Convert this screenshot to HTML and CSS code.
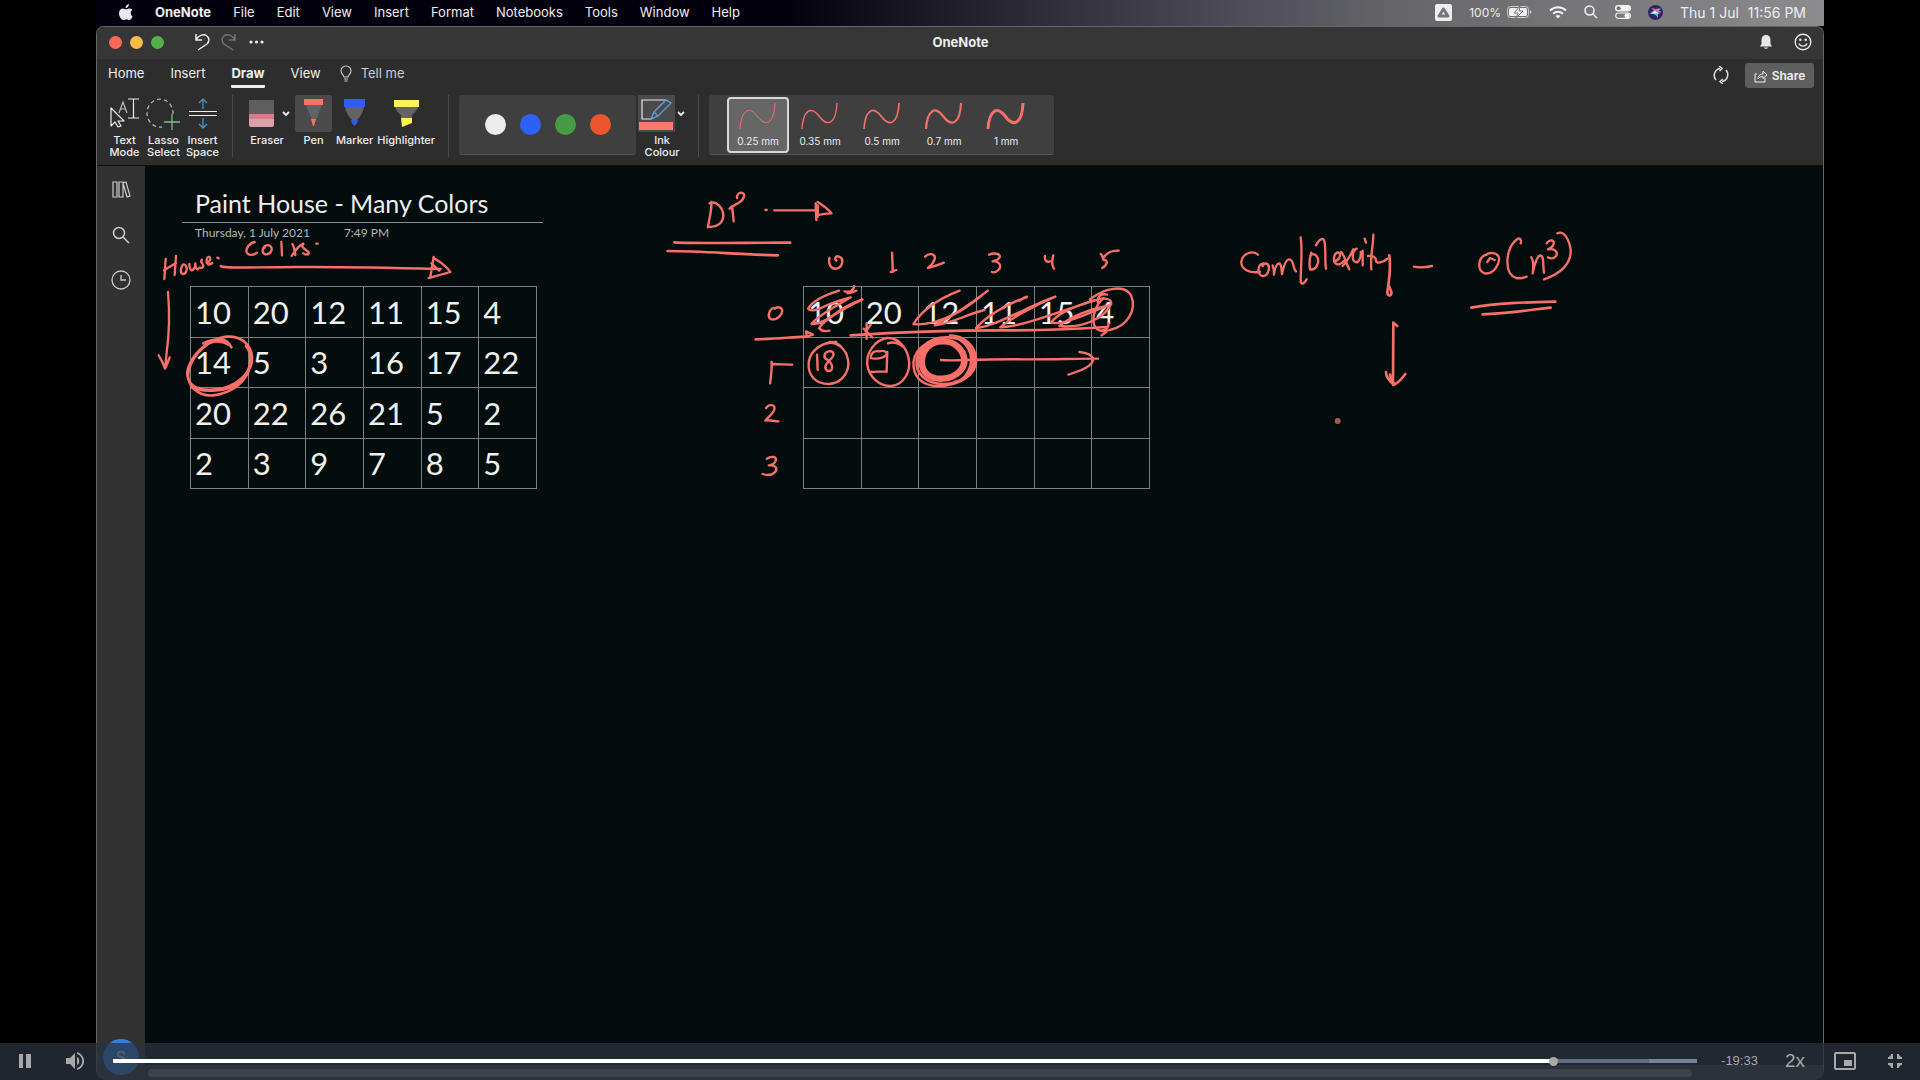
FILE: index.html
```html
<!DOCTYPE html>
<html lang="en">
<head>
<meta charset="utf-8">
<title>Paint House - Many Colors</title>
<link rel="stylesheet" href="styles.css">
</head>
<body>
<main class="stage">
  <nav class="menubar" aria-label="Menu bar">
    <div class="menus">
      <svg class="apple" width="14" height="17" viewBox="0 0 14 17"><path fill="#e8e8ec" d="M9.900 0c.1 1.300-.4 2.300-1 3-.6.700-1.400 1.200-2.300 1.100C6.500 3 7 2 7.600 1.300 8.200.6 9.200.1 9.900 0zM13.600 12.200c-.9 2.200-1.900 3.900-3.300 3.900-1 0-1.500-.6-2.800-.6s-1.900.6-2.800.6C2.600 16.100 0 12.900 0 9.200 0 6.200 1.900 4.400 4 4.400c1.200 0 2.200.8 3 .8s2-.9 3.500-.8c1 0 2.100.5 2.800 1.500-2.300 1.500-2 4.900.3 6.300z"/></svg>
      <a href="#" class="app">OneNote</a>
      <a href="#">File</a>
      <a href="#">Edit</a>
      <a href="#">View</a>
      <a href="#">Insert</a>
      <a href="#">Format</a>
      <a href="#">Notebooks</a>
      <a href="#">Tools</a>
      <a href="#">Window</a>
      <a href="#">Help</a>
    </div>
    <div class="status">
      <svg width="17" height="17" viewBox="0 0 17 17"><rect width="17" height="17" rx="2" fill="#eee"/><path d="M8.500 5 13 12H4z" fill="none" stroke="#77777a" stroke-width="3" stroke-linejoin="round"/></svg>
      <span class="battery"><span>100%</span>
        <svg width="25" height="12" viewBox="0 0 25 12"><rect x=".5" y=".5" width="21" height="11" rx="3" fill="none" stroke="#ccc"/><rect x="2" y="2" width="18" height="8" rx="1.500" fill="#f2f2f2"/><path d="M23 4v4c2-1 2-3 0-4z" fill="#ccc"/><path d="M13 0 7 7h4l-2 5 7-7h-4z" fill="#f2f2f2" stroke="#77777a"/></svg></span>
      <svg width="18" height="13" viewBox="0 0 18 13" fill="none" stroke="#f2f2f2" stroke-width="2"><path d="M1 4.500c4.500-4.300 11.500-4.300 16 0M4 7.800c3-2.600 7-2.600 10 0"/><path d="M6.500 10c1.500-1.200 3.500-1.200 5 0L9 12.500z" fill="#f2f2f2" stroke="none"/></svg>
      <svg width="14" height="14" viewBox="0 0 14 14" fill="none" stroke="#f2f2f2" stroke-width="1.500"><circle cx="5.500" cy="5.500" r="4.500"/><path d="m9 9 4 4"/></svg>
      <svg width="16" height="14" viewBox="0 0 16 14"><rect width="16" height="6.500" rx="3.200" fill="#f2f2f2"/><circle cx="3.600" cy="3.200" r="2" fill="#77777a"/><rect x=".7" y="8" width="14.600" height="5.400" rx="2.700" fill="none" stroke="#f2f2f2" stroke-width="1.200"/><circle cx="12" cy="10.700" r="2.500" fill="#f2f2f2"/></svg>
      <svg width="15" height="15" viewBox="0 0 15 15"><circle cx="7.500" cy="7.500" r="7.500" fill="#2d2560"/><path d="M1 9c3-1 6-7 12-5-3 1-3 4-3 9-2-3-4-5-9-4z" fill="#4fb7e8"/><path d="M3 3c4 0 7 3 11 4-4 2-7 0-11-4z" fill="#e5629c"/><path d="M3 9c3-1 6-1 9 0L7 6z" fill="#fff"/></svg>
      <time class="clock"><span>Thu 1 Jul</span><span>11:56 PM</span></time>
    </div>
  </nav>

  <section class="window">
    <header class="titlebar">
      <div class="title-left">
        <span class="lights"><i class="light red"></i><i class="light yellow"></i><i class="light green"></i></span>
        <span class="quick">
          <button type="button" aria-label="Undo"><svg width="16" height="18" viewBox="0 0 16 18"><path d="M2 1v6h6M2 6.500C5 2 10 .5 13 3s2 6 0 8l-9 6" fill="none" stroke="#eee" stroke-width="1.500"/></svg></button>
          <button type="button" aria-label="Redo"><svg width="16" height="18" viewBox="0 0 16 18"><path d="M14 1v6H8M14 6.500C11 2 6 .5 3 3s-2 6 0 8l9 6" fill="none" stroke="#737373" stroke-width="1.500"/></svg></button>
          <button type="button" aria-label="More"><svg width="16" height="18" viewBox="0 0 16 18" fill="#eee"><circle cx="3" cy="9" r="1.600"/><circle cx="8.500" cy="9" r="1.600"/><circle cx="14" cy="9" r="1.600"/></svg></button>
        </span>
      </div>
      <h1 class="app-title">OneNote</h1>
      <div class="title-right">
        <button type="button" aria-label="Notifications"><svg width="14" height="16" viewBox="0 0 14 16"><path d="M7 1c3 0 4.500 2 4.500 5v4L13 12.500H1L2.500 10V6c0-3 1.500-5 4.500-5zM5 13.500h4c-.5 1.800-3.500 1.800-4 0z" fill="#e8e8e8"/></svg></button>
        <button type="button" aria-label="Feedback"><svg width="18" height="18" viewBox="0 0 18 18" fill="none" stroke="#e8e8e8" stroke-width="1.400"><circle cx="9" cy="9" r="7.800"/><path d="M5 10.500c1.500 3.500 6.500 3.500 8 0"/><circle cx="6.300" cy="6.800" r=".6" fill="#e8e8e8"/><circle cx="11.700" cy="6.800" r=".6" fill="#e8e8e8"/></svg></button>
      </div>
    </header>

    <div class="tabs">
      <nav class="tab-list" aria-label="Ribbon tabs">
        <a href="#">Home</a>
        <a href="#">Insert</a>
        <a href="#" class="active">Draw</a>
        <a href="#">View</a>
        <a href="#" class="tell"><svg width="12" height="17" viewBox="0 0 12 17" fill="none" stroke="#ccc" stroke-width="1.100"><path d="M4 12c0-2-3-3-3-6a5 5 0 0 1 10 0c0 3-3 4-3 6zM4 14h4M4.500 16h3"/></svg>Tell me</a>
      </nav>
      <div class="tab-actions">
        <button type="button" aria-label="Sync"><svg width="18" height="18" viewBox="0 0 18 18" fill="none" stroke="#ddd" stroke-width="1.500"><path d="M4 14A7 7 0 0 1 8 2.500M14 4a7 7 0 0 1-4 11.500"/><path d="M7 0l3 2.500L7.500 5M11 13l-3 2.500 3 2.500"/></svg></button>
        <button type="button" class="share"><svg width="14" height="14" viewBox="0 0 14 14" fill="none" stroke="#eee"><path d="M3 5H1v8h10V9"/><path d="M4 10c0-4 3-5 5-5V2l4 4-4 3.500V7.500C7 7.500 5 8 4 10z"/></svg>Share</button>
      </div>
    </div>

    <div class="ribbon">
      <div class="group modes">
        <button type="button" class="tool"><svg width="36" height="37" viewBox="0 0 36 37" fill="none" stroke="#eee" stroke-width="1.200"><path d="M4 13v18l4-4 3 5 3-1-3-5h6z" stroke-linejoin="round"/><path d="m12 18 4-11 4 11M13.500 14h5" stroke="#bbb"/><path d="M21 4h11M21 23h11M26.500 4v19"/></svg>Text<br>Mode</button>
        <button type="button" class="tool"><svg width="36" height="37" viewBox="0 0 36 37" fill="none"><path d="M27 19A13 14 0 1 0 16 32" stroke="#bbb" stroke-width="1.200" stroke-dasharray="4 3"/><path d="M26 19v16M18 27h16" stroke="#72c483" stroke-width="1.300"/></svg>Lasso<br>Select</button>
        <button type="button" class="tool"><svg width="36" height="37" viewBox="0 0 36 37" fill="none"><path d="M4 16.500h28M4 20.500h28" stroke="#eee" stroke-width="1.200"/><path d="M18 14V4M14 8l4-4 4 4M18 23v10M14 29l4 4 4-4" stroke="#4a92c4" stroke-width="1.300"/></svg>Insert<br>Space</button>
      </div>
      <div class="group pens">
        <button type="button" class="tool"><svg width="48" height="37" viewBox="0 0 48 37"><path d="M6 5h25v15H6z" fill="#5e5e5e"/><path d="M6 19h25v11q0 2-2 2H8q-2 0-2-2z" fill="#d9a3ab"/><path d="M6 19h25v5H6z" fill="#d27f8b"/><path d="m40 17 3 3 3-3" fill="none" stroke="#eee" stroke-width="1.800"/></svg>Eraser</button>
        <button type="button" class="tool selected"><svg width="37" height="37" viewBox="0 0 37 37"><path d="M9 4h19v6H9z" fill="#f77465"/><path d="M11 10h16l-6 15h-4z" fill="#636363"/><path d="M16 24h5l-2 7h-1z" fill="#f77465"/></svg>Pen</button>
        <button type="button" class="tool"><svg width="37" height="37" viewBox="0 0 37 37"><path d="M8 4h21v8H8z" fill="#2f5cf5"/><path d="M9 12h19q-1 7-7 13h-5q-6-6-7-13z" fill="#636363"/><path d="M15 25h7q0 3-3.500 6Q15 28 15 25z" fill="#2f5cf5"/></svg>Marker</button>
        <button type="button" class="tool"><svg width="37" height="37" viewBox="0 0 37 37"><path d="M6 5h25v7H6z" fill="#fbf355"/><path d="M7 12h23q-1 4-6 8v3H13v-3q-5-4-6-8z" fill="#636363"/><path d="M13 23h11v5l-10 4z" fill="#fbf355"/></svg>Highlighter</button>
      </div>
      <div class="group colours">
        <div class="palette">
          <button type="button" class="swatch white" aria-label="White"></button>
          <button type="button" class="swatch blue" aria-label="Blue"></button>
          <button type="button" class="swatch leaf" aria-label="Green"></button>
          <button type="button" class="swatch orange" aria-label="Orange"></button>
        </div>
        <button type="button" class="tool ink-colour"><svg width="48" height="37" viewBox="0 0 48 37"><path d="M0 0h37v37H0z" fill="#4a4a4a"/><path d="M1 27h34v8H1z" fill="#f77b6c"/><path d="M28 5H4v19h10" fill="none" stroke="#e8e8e8" stroke-width="1.200"/><path d="m13 24 3-7L28 5l5 3-13 13zM16 17l4 4" fill="none" stroke="#5b9bd8" stroke-width="1.400"/><path d="m40 17 3 3 3-3" fill="none" stroke="#eee" stroke-width="1.800"/></svg>Ink<br>Colour</button>
      </div>
      <div class="group widths">
        <div class="width-panel">
          <button type="button" class="nib on"><svg width="40" height="28" viewBox="0 0 40 28"><path d="M2 27C3 9 11 3 19 14s17 9 18-13" stroke-width="1"/></svg>0.25 mm</button>
          <button type="button" class="nib"><svg width="40" height="28" viewBox="0 0 40 28"><path d="M2 27C3 9 11 3 19 14s17 9 18-13" stroke-width="1.300"/></svg>0.35 mm</button>
          <button type="button" class="nib"><svg width="40" height="28" viewBox="0 0 40 28"><path d="M2 27C3 9 11 3 19 14s17 9 18-13" stroke-width="1.700"/></svg>0.5 mm</button>
          <button type="button" class="nib"><svg width="40" height="28" viewBox="0 0 40 28"><path d="M2 27C3 9 11 3 19 14s17 9 18-13" stroke-width="2.200"/></svg>0.7 mm</button>
          <button type="button" class="nib"><svg width="40" height="28" viewBox="0 0 40 28"><path d="M2 27C3 9 11 3 19 14s17 9 18-13" stroke-width="3"/></svg>1 mm</button>
        </div>
      </div>
    </div>

    <div class="workspace">
      <aside class="sidebar">
        <button type="button" aria-label="Notebooks"><svg width="20" height="20" viewBox="0 0 20 20" fill="none" stroke="#ccc" stroke-width="1.200"><path d="M2 2h4v15H2zM8 2h4v15H8zM12 3l3-1 4 14-3 1z"/></svg></button>
        <button type="button" aria-label="Search"><svg width="20" height="20" viewBox="0 0 20 20" fill="none" stroke="#ccc" stroke-width="1.500"><circle cx="8" cy="8" r="5.500"/><path d="m12 12 6 6"/></svg></button>
        <button type="button" aria-label="Recent"><svg width="20" height="20" viewBox="0 0 20 20" fill="none" stroke="#ccc" stroke-width="1.300"><circle cx="10" cy="10" r="9"/><path d="M10 5v5h5"/></svg></button>
        <span class="avatar">S</span>
      </aside>

      <article class="canvas">
        <header class="note-head">
          <h2>Paint House - Many Colors</h2>
          <p><span>Thursday, 1 July 2021</span><span>7:49 PM</span></p>
        </header>
        <div class="grids">
          <table class="grid">
            <tr><td>10</td><td>20</td><td>12</td><td>11</td><td>15</td><td>4</td></tr>
            <tr><td>14</td><td>5</td><td>3</td><td>16</td><td>17</td><td>22</td></tr>
            <tr><td>20</td><td>22</td><td>26</td><td>21</td><td>5</td><td>2</td></tr>
            <tr><td>2</td><td>3</td><td>9</td><td>7</td><td>8</td><td>5</td></tr>
          </table>
          <table class="grid">
            <tr><td>10</td><td>20</td><td>12</td><td>11</td><td>15</td><td>4</td></tr>
            <tr><td></td><td></td><td></td><td></td><td></td><td></td></tr>
            <tr><td></td><td></td><td></td><td></td><td></td><td></td></tr>
            <tr><td></td><td></td><td></td><td></td><td></td><td></td></tr>
          </table>
        </div>
        <div class="scroll-bar"><div class="scroll-thumb"></div></div>

        <!-- pen strokes drawn over the note -->
        <svg class="ink" width="1679" height="914" viewBox="145 166 1679 914">
          <svg x="90" y="160" width="480" height="340" viewBox="0 0 1440 1020">
            <path d="M494 246C478 248 466 268 470 277c4 10 20 10 31 1M524 258c-9 10-8 26 6 25 15-1 20-20 9-26-8-4-15 0-16 7M574 246l2 40M607 252c6 10 8 24 9 33M605 288c11-18 24-32 35-37M640 252c-11 9 9 17 16 25 2 8-10 8-16 3M679 251h4"/>
            <path d="M227 297l-4 60M222 331l36-22M258 288l-4 57M276 318c-6 12-4 24 4 24s14-16 8-24-10-4-12 0M298 312c0 12 4 22 10 18s8-12 8-20c0 8 2 18 8 18M336 299c-8 6 4 12 4 18s-6 8-12 6M350 308c10-2 14-14 8-17s-11 10-7 18 9 4 16 0M382 293l4 2"/>
            <path d="M392 318c10 8 60 4 228 3s280 2 432 6M1031 291l-10 60M1030 293c20 12 42 28 51 43-20 6-42 12-65 18M1024 310l24 22"/>
            <path d="M234 396c6 70 3 130-4 182l-5 48M206 586c8 12 14 26 19 40 6-12 10-24 14-34"/>
            <path class="thick" d="M424 562c-14-32-54-27-84-2-30 25-50 60-48 85 4 45 58 50 108 40 50-15 90-55 86-95-4-40-36-63-76-60-50 6-100 50-114 100-11 50 34 80 74 76 50-6 98-36 110-86"/>
            <path class="thick" d="M304 682c30 14 110 18 150-20 30-30 36-80 14-104M346 556c20-16 50-14 70-2M340 550c24-12 44-14 66-8"/>
          </svg>
          <svg x="640" y="180" width="540" height="320" viewBox="0 0 1568 960" preserveAspectRatio="none">
            <path d="M207 66c2 26-8 60-10 76M202 70c20-10 38 14 40 34 0 24-18 40-44 36M268 84l4 40M260 86c8-10 20-12 30-20 10-6 20-26 4-28-8 0-14 8-12 16"/>
            <path d="M364 90h4M390 91h126M510 70l2 50M516 66c12 8 30 20 40 34-14 0-28 2-44 6M516 76v34"/>
            <path class="thick" d="M100 187c60 4 200 1 336 1M80 213c100 0 200 10 320 13"/>
            <path d="M550 234c-4 20 6 34 20 32 18-4 24-30 8-36-10-4-14 6-8 12M732 218l2 58M728 276l16-6M828 230c10-12 30-10 28 6-4 16-16 24-20 28 12-4 30-8 46-16M1014 224c14-6 34-4 30 8-4 10-16 10-20 12 14-2 26 8 20 22-6 10-16 12-22 10M1176 228c-2 14 6 20 14 16M1200 226c-4 16-4 32 2 40M1338 222c6 4 6 12 8 18 14 0 12 14-4 24M1344 236c8-14 20-26 46-24"/>
            <path d="M388 384c-14 4-20 30-6 34 18 2 34-16 30-30-4-8-16-8-20-2M382 546c2 20-2 40-4 64M386 552c20 2 40 0 56 2M366 684c10-14 28-10 24 4-2 12-22 26-26 34 10-4 24 2 38 2M368 836c12-8 30-8 26 6-2 8-12 14-20 14 16-2 26 6 20 18-8 10-22 14-38 8"/>
            <path class="thick" d="M336 478c60-2 100-6 144-8M612 466c140-10 300-16 480-15 100-1 180-4 264-10"/>
            <path d="M482 454l20 10-18 6zM658 430v46M670 434l-14 20M650 446l24 26"/>
            <path d="M578 332c-50 16-80 36-90 54 6 10 30 4 50-8 30-14 60-22 74-26-60 36-100 60-114 80 30 2 60-26 90-46 20-12 40-22 58-28-60 30-110 60-126 86 8 12 20 10 30 8M594 334c14 4 26-2 28-16M602 340c12 0 20-6 26-8"/>
            <path d="M928 332c-60 24-110 60-134 100 40 6 80-10 120-30 40-20 70-50 96-70-50 40-110 80-154 104 50-6 90-32 144-46M1122 352c-60 20-120 60-146 92 60-6 160-70 230-94-60 26-130 66-160 92 70-2 170-50 300-88M1124 350c-10 2-16 8-22 12"/>
            <path d="M1320 360c-60 20-110 40-126 68 30 8 90-20 166-52-50 10-110 34-142 62 60 8 130-20 150-66 2-16-20-20-28-12-30 30-40 110 24 90 50-10 80-60 62-104-20-36-80-20-120 12M1356 344c-20-6-30 10-26 26M1340 452c16-2 22-14 20-22M1340 466l14-10"/>
            <path d="M570 486c-40-2-76 26-80 60-4 40 20 66 58 66 40-2 62-40 56-72-6-36-34-56-60-50-12 2-30 10-36 20M584 500c-12-12-24-14-34-14M514 524l2 46M550 514c-14 0-20 18-8 24 12 6 20 20 14 32-12 8-22-4-16-16 6-12 24-22 22-32-2-8-8-10-14-8"/>
            <path d="M718 474c-36 6-62 44-58 80 4 38 38 66 70 64 36-4 58-44 50-84-8-32-28-60-60-60M720 490c16-6 34 0 44 10M694 514c-16-4-24 8-24 20 10 4 36 2 46-10 2-10-10-14-22-10M718 516l-2 60M716 574c-16 0-30 2-48 2"/>
            <path class="brush" d="M882 484c-42-2-64 30-64 62 0 32 24 52 60 50 40-2 66-30 64-58-4-30-28-54-60-54"/>
            <path class="thick" d="M820 500c40-40 120-36 140 6 24 40 2 90-50 102-46 12-90-4-104-40-10-34 8-76 60-88"/>
            <path d="M900 466c40 0 76 30 76 76 0 44-50 76-110 76-50 0-74-30-72-72 4-26 20-44 36-52M956 500c14 30 10 70-20 96M930 480c40 30 44 80 0 124"/>
            <path d="M874 540c40 4 100-4 250-2 80 0 140-2 206-2M1276 516c20 2 36 10 40 20 0 24-40 36-72 48"/>
          </svg>
          <svg x="1200" y="200" width="420" height="240" viewBox="0 0 1260 720">
            <path d="M174 164c-16-14-46-4-50 20-2 24 24 36 56 32M190 190c-20 4-18 36-2 38 18 0 26-32 10-38-6 0-8 4-10 8M218 196c4 10 4 20 4 28 2-16 6-34 16-34 8 4 6 20 8 32 4-20 10-44 22-44 14 0 10 28 20 36"/>
            <path d="M302 112c6 46 0 90 0 134 4 10 12 2 18-8M334 158c-6 18-6 38-4 50 18 4 30-22 22-36-4-10-16-12-20-6M348 136c8-18 24-28 26-8 4 26 0 58 4 78M402 184c14 0 24-22 14-26s-18 16-12 28 20 8 28-4M424 156c10 12 16 38 24 52M428 198c14-14 24-34 32-50M470 146c-16 8-14 36-4 40s18-14 16-30M488 152v44M494 116l4 12M520 104c0 30-10 70-6 104M504 168c14-2 24 4 24 14s22 6 34-6"/>
            <path class="thick" d="M568 166c6 40-2 80-6 110 0 14 14 14 12 0-2-8-6-14-8-20"/>
            <path d="M642 200c18 4 36 2 54-2M858 164c-24 8-28 48-4 56 26 4 48-28 42-50-6-12-28-14-36-6M862 186l8-12 14 6M962 130c4-14-6-20-16-8-30 30-34 100 2 112 10 2 22 0 32-4M994 172c8 12 6 32 4 48 4-20 10-50 22-54 14 0 8 36 12 52M1040 130c10-14 26-10 20 4-2 8-12 12-16 14 18-4 32 8 24 20-6 8-16 8-24 4M1072 100c20-10 36 20 40 50 2 40-30 72-80 88"/>
            <path class="thick" d="M814 323c80-14 160-16 252-18M848 343c70-2 130-12 204-20"/>
            <path class="thick" d="M580 368l-1 186M580 368l12 10M558 516c0 14 10 28 25 38 12-6 24-20 33-32M570 524c2 12 6 20 12 26"/>
            <circle class="dot" cx="413" cy="663" r="9"/>
          </svg>
        </svg>
      </article>
    </div>
  </section>

  <footer class="player">
    <button type="button" aria-label="Pause"><svg width="14" height="14" viewBox="0 0 14 14"><path d="M1 0h4v14H1zM8 0h5v14H8z"/></svg></button>
    <button type="button" aria-label="Mute"><svg width="18" height="18" viewBox="0 0 18 18"><path d="M0 6v6h4l5 5V1L4 6z"/><path d="M11 5v8c3-1 3-7 0-8zM11 0v2c7 2 7 12 0 14v2c10-3 9-15 0-18z"/></svg></button>
    <input class="seek" type="range" min="0" max="1000" value="912" aria-label="Progress">
    <span class="remaining">-19:33</span>
    <button type="button" class="rate">2x</button>
    <button type="button" aria-label="Picture in picture"><svg width="22" height="18" viewBox="0 0 22 18"><rect x="1" y="1" width="20" height="16" rx="1" fill="none" stroke="#a8a8a8" stroke-width="2"/><path d="M10 8h8v6h-8z"/></svg></button>
    <button type="button" aria-label="Exit full screen"><svg width="14" height="14" viewBox="0 0 14 14" fill="none" stroke="#a8a8a8" stroke-width="2"><path d="M4 0v4H0M10 0v4h4M4 14v-4H0M10 14v-4h4"/></svg></button>
  </footer>
</main>
</body>
</html>
```
FILE: styles.css
```css
* { box-sizing: border-box; }

body {
  margin: 0;
  background: #000;
  color: #eee;
  font-family: Inter, "Liberation Sans", sans-serif;
  font-size: 13px;
}

button {
  display: flex;
  align-items: center;
  justify-content: center;
  margin: 0;
  padding: 0;
  border: 0;
  background: none;
  color: inherit;
  font: inherit;
}

a { color: inherit; text-decoration: none; }
svg { display: block; flex: none; }
h1, h2, p { margin: 0; }

.stage {
  position: relative;
  display: flex;
  flex-direction: column;
  min-height: 100vh;
  padding: 0 5%;
  overflow: hidden;
}

/* macOS menu bar */
.menubar {
  display: flex;
  align-items: center;
  justify-content: space-between;
  height: 26px;
  padding: 0 18px 2px 23px;
  background: linear-gradient(90deg, #04010f 40%, #2a2834 53%, #4a4955 65%, #67676b 76%, #8c8c8f);
}

.menus, .status, .battery, .clock { display: flex; align-items: center; }
.menus { gap: 22px; }
.app { font-weight: 700; }
.status { gap: 17px; }
.battery { gap: 6px; font-size: 12px; }
.clock { gap: 9px; font-size: 14px; }

/* application window */
.window {
  flex: 1;
  display: flex;
  flex-direction: column;
  border: 1px solid #666;
  border-bottom: 0;
  border-radius: 8px 8px 10px 10px;
  background: #2d2d2d;
  overflow: hidden;
}

.titlebar {
  display: grid;
  grid-template-columns: 1fr auto 1fr;
  align-items: center;
  height: 32px;
  padding: 0 11px 2px 12px;
  background: #363636;
}

.title-left, .title-right, .lights, .quick { display: flex; align-items: center; }
.title-left { gap: 30px; }
.lights { gap: 8px; }
.light { width: 13px; height: 13px; border-radius: 50%; }
.red { background: #fb6a56; }
.yellow { background: #f8bb45; }
.green { background: #56b04a; }
.quick { gap: 11px; }
.app-title { font-size: 13px; font-weight: 700; }
.title-right { justify-content: flex-end; gap: 21px; }

.tabs {
  display: flex;
  justify-content: space-between;
  height: 32px;
  padding: 4px 9px 0 11px;
}

.tab-list { display: flex; gap: 26px; line-height: 21px; }
.tab-list a { height: 25px; }
.tab-list .active { border-bottom: 3px solid #eee; border-radius: 1px; font-weight: 700; }
.tab-list .tell { display: flex; gap: 9px; align-items: center; height: 21px; margin-left: -7px; color: #ccc; }
.tab-actions { display: flex; gap: 15px; align-items: flex-start; }
.tab-actions button { height: 24px; }
.tab-actions .share { gap: 4px; width: 69px; height: 25px; border-radius: 3px; background: #5e5e5e; font-size: 12px; font-weight: 600; }

.ribbon {
  display: flex;
  height: 75px;
  padding: 4px 8px 0;
  border-bottom: 1px solid #0c100f;
}

.group { display: flex; align-items: flex-start; height: 62px; }
.group + .group { margin-left: 10px; padding-left: 10px; border-left: 1px solid #4a4a4a; }
.pens { gap: 4px; }
.pens + .group { margin-left: 13px; }
.colours { gap: 2px; }
.colours + .group { margin-left: 12px; }

.tool {
  flex-direction: column;
  gap: 2px;
  min-width: 37px;
  font-size: 11px;
  font-weight: 500;
  line-height: 12px;
}

.modes .tool { width: 39px; }
.selected svg { border-radius: 2px; background: #4a4a4a; }

.palette, .width-panel {
  display: flex;
  align-items: center;
  height: 60px;
  border-bottom: 1px solid #555;
  border-radius: 3px;
  background: #3f3f3f;
}

.palette { gap: 14px; justify-content: center; width: 177px; }
.swatch { width: 21px; height: 21px; border-radius: 50%; }
.white { background: #ececea; }
.blue { background: #2e61f6; }
.leaf { background: #459c45; }
.orange { background: #ee552e; }

.width-panel { width: 345px; padding-left: 18px; }
.nib {
  flex-direction: column;
  gap: 5px;
  width: 62px;
  height: 56px;
  border: 2px solid transparent;
  border-radius: 4px;
  font-size: 10px;
  line-height: 12px;
}
.nib.on { border-color: #d8d8d8; background: #666; }
.nib path { fill: none; stroke: #f5706c; }

/* note area */
.workspace { flex: 1; display: flex; }

.sidebar {
  display: flex;
  flex-direction: column;
  align-items: center;
  gap: 25px;
  width: 48px;
  padding: 14px 0 5px;
  background: #323232;
}

.avatar {
  display: grid;
  place-items: center;
  width: 36px;
  height: 36px;
  margin-top: auto;
  border-radius: 50%;
  background: #2f7fe0;
  font-size: 16px;
}

.canvas {
  position: relative;
  flex: 1;
  display: flex;
  flex-direction: column;
  padding: 20px 0 0;
  background: #030d0d;
  font-family: Lato, "Liberation Sans", sans-serif;
}

.note-head { width: 361px; margin-left: 37px; }
.note-head h2 { padding: 0 13px 1px; border-bottom: 1px solid #8b908f; font-size: 25px; font-weight: 400; line-height: 35px; }
.note-head p { display: flex; gap: 34px; padding: 0 13px; color: #b4b8b7; font-size: 12px; line-height: 20px; }

.grids { display: flex; gap: 266px; padding: 43px 45px 0; }

.grid {
  width: 347px;
  height: 203px;
  border-collapse: collapse;
  table-layout: fixed;
  color: #f0f0ee;
  font-size: 31px;
  line-height: 40px;
}
.grid td { height: 50px; padding: 0 0 0 4px; border: 1px solid #7c8180; }

.scroll-bar { height: 15px; margin-top: auto; padding: 4px 131px 0 3px; background: #303030; }
.scroll-thumb { height: 8px; border-radius: 4px; background: #767676; }

.ink { position: absolute; left: 0; top: 0; fill: none; stroke: #fa6f68; stroke-width: 7; stroke-linecap: round; stroke-linejoin: round; pointer-events: none; }
.ink .thick { stroke-width: 8; }
.ink .brush { stroke-width: 19; }
.ink .dot { fill: #a85550; stroke: none; }

/* video controls */
.player {
  position: absolute;
  inset: auto 0 0;
  display: flex;
  align-items: center;
  height: 37px;
  padding-bottom: 1px;
  background: rgba(43, 51, 63, 0.75);
  color: #a8a8a8;
  font-family: "Liberation Sans", sans-serif;
}
.player button { width: 50px; height: 36px; }
.player svg { fill: #a8a8a8; }
.remaining { width: 73px; padding: 0 0 1px 12px; text-align: center; }
.player .rate { font-size: 19px; }

.seek {
  flex: 1;
  height: 4px;
  margin: 0 0 0 13px;
  appearance: none;
  background: linear-gradient(90deg, #fff 91%, #5f6f87 91%, #5f6f87 97%, #71849c 97%);
}
.seek::-webkit-slider-thumb { appearance: none; width: 9px; height: 9px; border-radius: 50%; background: #a8a8a8; }
```
